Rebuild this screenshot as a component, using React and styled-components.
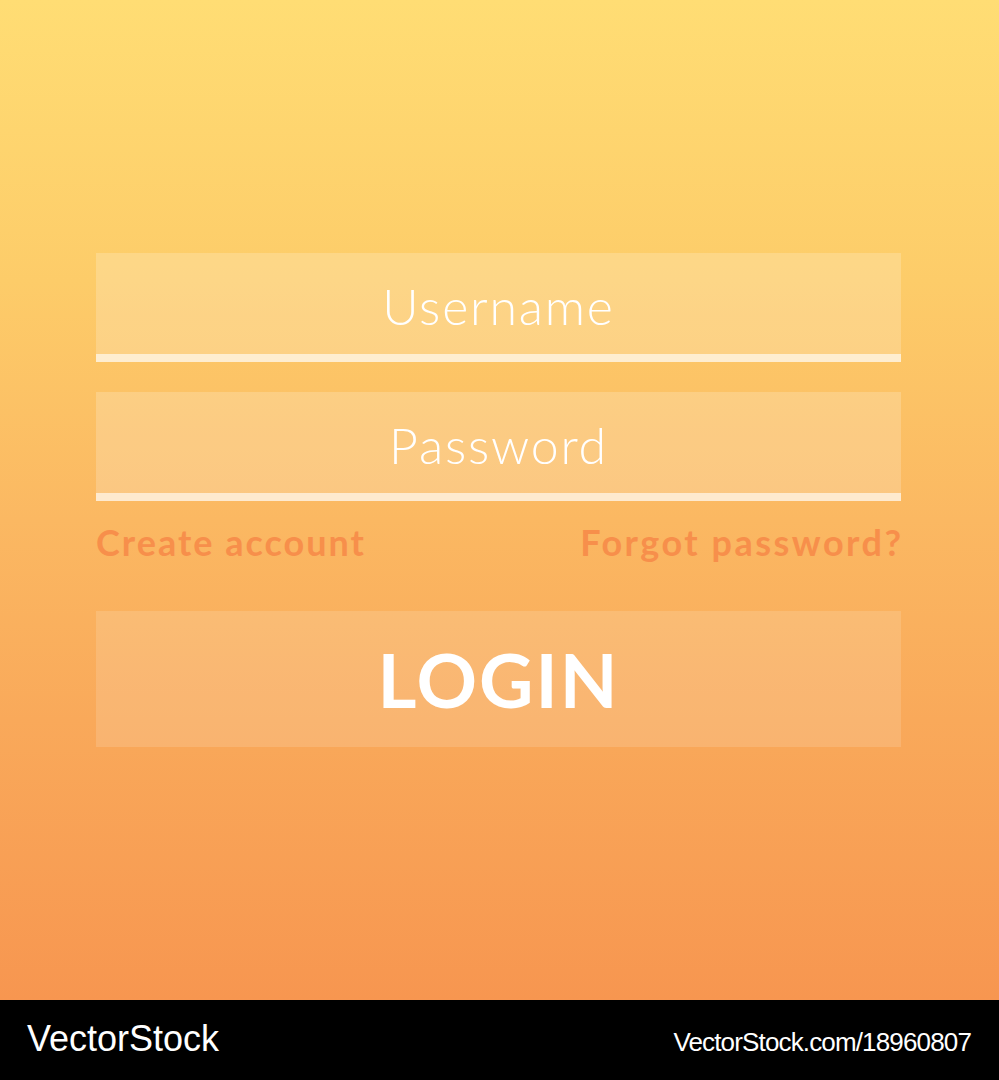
import React from "react";
import styled, { createGlobalStyle } from "styled-components";

const Global = createGlobalStyle`
  html, body { margin: 0; padding: 0; }
  body { width: 999px; height: 1080px; overflow: hidden; font-family: "Lato", "Noto Sans", sans-serif; }
`;

const Page = styled.div`
  width: 999px;
  height: 1080px;
  display: flex;
  flex-direction: column;
`;

const Stage = styled.main`
  height: 1000px;
  box-sizing: border-box;
  padding: 253px 98px 0 96px;
  background: linear-gradient(180deg, #ffdd74 0%, #fdcc69 28%, #fbb862 52%, #f9a95a 72%, #f79650 100%);
`;

const Form = styled.form`
  display: flex;
  flex-direction: column;
  width: 805px;
`;

const Field = styled.div`
  height: 101px;
  border-bottom: 8px solid rgba(255, 255, 255, 0.62);
  background: rgba(255, 255, 255, 0.2);
  display: flex;
  align-items: center;
  justify-content: center;
  margin-bottom: ${(p) => p.$gap || 0}px;
`;

const Placeholder = styled.span`
  font-family: "Lato", sans-serif;
  font-weight: 300;
  font-size: 50px;
  letter-spacing: 1.8px;
  color: #ffffff;
  line-height: 1;
  padding-top: 4px;
`;

const Links = styled.div`
  display: flex;
  justify-content: space-between;
  padding-top: 23px;
  margin-bottom: 51px;
`;

const LinkText = styled.a`
  font-family: "Lato", sans-serif;
  font-weight: 700;
  font-size: 36px;
  line-height: 36px;
  letter-spacing: ${(p) => p.$spacing}px;
  margin-right: ${(p) => -p.$spacing}px;
  color: #f78f4b;
  text-decoration: none;
`;

const LoginButton = styled.button`
  height: 136px;
  border: none;
  padding: 0;
  background: rgba(255, 255, 255, 0.14);
  color: #ffffff;
  font-family: "Lato", sans-serif;
  font-weight: 700;
  font-size: 75px;
  letter-spacing: 2px;
  line-height: 1;
  display: flex;
  align-items: center;
  justify-content: center;
`;

const Footer = styled.footer`
  height: 80px;
  background: #000000;
  display: flex;
  align-items: center;
  justify-content: space-between;
  padding: 0 28px 0 27px;
  color: #ffffff;
  font-family: "Liberation Sans", Arial, sans-serif;
`;

const Brand = styled.span`
  font-size: 36px;
  letter-spacing: 0px;
  padding-bottom: 2px;
`;

const Url = styled.span`
  font-size: 26px;
  letter-spacing: -0.85px;
  padding-top: 4px;
`;

export default function App() {
  return (
    <Page>
      <Global />
      <Stage>
        <Form onSubmit={(e) => e.preventDefault()}>
          <Field $gap={30}>
            <Placeholder>Username</Placeholder>
          </Field>
          <Field>
            <Placeholder>Password</Placeholder>
          </Field>
          <Links>
            <LinkText href="#" $spacing={2}>Create account</LinkText>
            <LinkText href="#" $spacing={2.5}>Forgot password?</LinkText>
          </Links>
          <LoginButton type="submit">LOGIN</LoginButton>
        </Form>
      </Stage>
      <Footer>
        <Brand>VectorStock</Brand>
        <Url>VectorStock.com/18960807</Url>
      </Footer>
    </Page>
  );
}
